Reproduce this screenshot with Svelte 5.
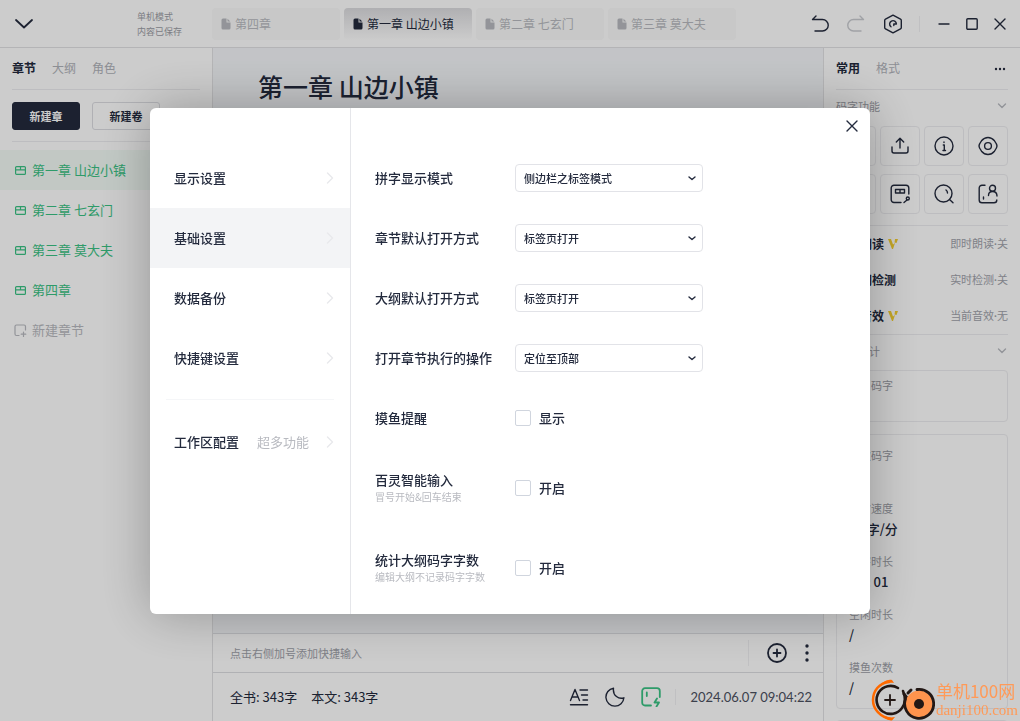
<script>
  const tabs = ['第四章', '第一章 山边小镇', '第二章 七玄门', '第三章 莫大夫'];
  const chapters = ['第一章 山边小镇', '第二章 七玄门', '第三章 莫大夫', '第四章'];
  const menu = ['显示设置', '基础设置', '数据备份', '快捷键设置'];

  const features = [
    { name: '智能朗读', state: '即时朗读·关', vip: true },
    { name: '敏感词检测', state: '实时检测·关', vip: false },
    { name: '码字音效', state: '当前音效·无', vip: true }
  ];

  const stats = [
    { label: '本次码字', value: '0' },
    { label: '实时速度', value: '13 字/分' },
    { label: '码字时长', value: '00 : 01' },
    { label: '空闲时长', value: '/' },
    { label: '摸鱼次数', value: '/' }
  ];

  const selects = [
    { id: 'spell', label: '拼字显示模式', options: ['侧边栏之标签模式', '独立窗口模式'] },
    { id: 'chapter', label: '章节默认打开方式', options: ['标签页打开', '新窗口打开'] },
    { id: 'outline', label: '大纲默认打开方式', options: ['标签页打开', '新窗口打开'] },
    { id: 'action', label: '打开章节执行的操作', options: ['定位至顶部', '定位至底部'] }
  ];

  const checks = [
    { id: 'remind', label: '摸鱼提醒', hint: '', text: '显示' },
    { id: 'smart', label: '百灵智能输入', hint: '冒号开始&回车结束', text: '开启' },
    { id: 'count', label: '统计大纲码字字数', hint: '编辑大纲不记录码字字数', text: '开启' }
  ];

  let activeTab = $state(1);
  let activeChapter = $state(0);
  let activeMenu = $state(1);
  let open = $state(true);
</script>

{#snippet chevronDown()}
  <svg width="10" height="6" viewBox="0 0 10 6" class="line"><path d="M1.500 1l3.500 3.500L8.500 1" /></svg>
{/snippet}

<div class="app">
  <header>
    <div class="brand">
      <button class="icon" aria-label="收起">
        <svg width="18" height="10" viewBox="0 0 18 10" class="line thick"><path d="M1 1l8 7.500L17 1" /></svg>
      </button>
      <p class="save">单机模式<br />内容已保存</p>
    </div>
    <nav class="tabs">
      {#each tabs as tab, i}
        <button class="tab" class:active={activeTab === i} onclick={() => (activeTab = i)}>
          <svg width="10" height="12" viewBox="0 0 10 12">
            <path d="M2 .5h3.500v4h4V10a1.500 1.500 0 0 1-1.500 1.500H2A1.500 1.500 0 0 1 .5 10V2A1.500 1.500 0 0 1 2 .5zM6.500.7l2.800 2.800H6.500z" fill="currentColor" />
          </svg>
          {tab}
        </button>
      {/each}
    </nav>
    <div class="tools">
      <button class="icon" aria-label="撤销">
        <svg width="18" height="18" viewBox="0 0 18 18" class="line"><path d="M5 1L1.500 4.500H11.500a5.500 5.500 0 0 1 0 11.500H4" /></svg>
      </button>
      <button class="icon faded" aria-label="重做">
        <svg width="18" height="18" viewBox="0 0 18 18" class="line"><path d="M13 1l3.500 3.500H6.500a5.500 5.500 0 0 0 0 11.500H14" /></svg>
      </button>
      <button class="icon" aria-label="设置" onclick={() => (open = true)}>
        <svg width="20" height="20" viewBox="0 0 20 20" class="line">
          <path d="M10 1.200l7.500 4a1.500 1.500 0 0 1 .8 1.300v7a1.500 1.500 0 0 1-.8 1.300l-7.500 4-7.500-4a1.500 1.500 0 0 1-.8-1.300v-7a1.500 1.500 0 0 1 .8-1.300z" />
          <path d="M8 12.800A3.400 3.400 0 1 1 13.400 10M13.400 10H10.800V11.500" />
        </svg>
      </button>
      <span class="split"></span>
      <div class="window">
        <button class="icon" aria-label="最小化">
          <svg width="12" height="12" viewBox="0 0 12 12" class="line"><path d="M1 6h10" /></svg>
        </button>
        <button class="icon" aria-label="最大化">
          <svg width="12" height="12" viewBox="0 0 12 12" class="line"><rect x=".8" y=".8" width="10.400" height="10.400" rx="1" /></svg>
        </button>
        <button class="icon" aria-label="关闭">
          <svg width="12" height="12" viewBox="0 0 12 12" class="line"><path d="M1 1l10 10M11 1L1 11" /></svg>
        </button>
      </div>
    </div>
  </header>

  <div class="body">
    <aside class="left">
      <div class="switch">
        <button class="on">章节</button>
        <button>大纲</button>
        <button>角色</button>
      </div>
      <div class="create">
        <button class="primary">新建章</button>
        <button>新建卷</button>
      </div>
      <ul>
        {#each chapters as chapter, i}
          <li>
            <button class="chapter" class:active={activeChapter === i} onclick={() => (activeChapter = i)}>
              <svg width="11" height="9" viewBox="0 0 11 9" class="line thin">
                <rect x=".6" y=".6" width="9.800" height="7.800" rx="1" /><path d="M.6 3.800h9.800M5.500 .6v3.200" />
              </svg>
              {chapter}
            </button>
          </li>
        {/each}
        <li>
          <button class="chapter new">
            <svg width="13" height="13" viewBox="0 0 13 13" class="line thin">
              <path d="M5 11.500H2.500a1.500 1.500 0 0 1-1.500-1.500V2.500A1.500 1.500 0 0 1 2.500 1H10a1.500 1.500 0 0 1 1.500 1.500V6M9.500 8v4.500M7.200 10.200h4.600" />
            </svg>
            新建章节
          </button>
        </li>
      </ul>
    </aside>

    <main>
      <div class="editor">
        <h1>第一章 山边小镇</h1>
      </div>
      <div class="quick">
        <input aria-label="快捷输入" placeholder="点击右侧加号添加快捷输入" />
        <span class="split tall"></span>
        <button class="icon" aria-label="添加">
          <svg width="20" height="20" viewBox="0 0 20 20" class="line thick"><circle cx="10" cy="10" r="9" /><path d="M10 6.500v7M6.500 10h7" /></svg>
        </button>
        <button class="icon" aria-label="更多">
          <svg width="4" height="18" viewBox="0 0 4 18" fill="currentColor"><circle cx="2" cy="2" r="1.700" /><circle cx="2" cy="9" r="1.700" /><circle cx="2" cy="16" r="1.700" /></svg>
        </button>
      </div>
      <footer>
        <span>全书: 343字</span>
        <span>本文: 343字</span>
        <div class="modes">
          <button class="icon" aria-label="排版">
            <svg width="20" height="18" viewBox="0 0 20 18" class="line">
              <path d="M1.500 12.500L6 1.500l4.500 11M3 9h6M11 2h7.500M12.500 7h6M14 12h4.500M1.500 16.800h17" />
            </svg>
          </button>
          <button class="icon" aria-label="夜间">
            <svg width="20" height="20" viewBox="0 0 20 20" class="line"><path d="M8.500 1.200A9 9 0 1 0 18.900 10.800C14 12.500 7.500 9 8.500 1.200z" /></svg>
          </button>
          <button class="icon green" aria-label="专注">
            <svg width="20" height="20" viewBox="0 0 20 20" class="line thick">
              <path d="M10 18.500H4A2.800 2.800 0 0 1 1.200 15.700V4A2.800 2.800 0 0 1 4 1.200h12A2.800 2.800 0 0 1 18.800 4v6M5.800 5.500v3.500M16 11.500l-2.500 4h4.500l-2.500 4" />
            </svg>
          </button>
        </div>
        <span class="split"></span>
        <time>2024.06.07 09:04:22</time>
      </footer>
    </main>

    <aside class="right">
      <div class="switch">
        <button class="on">常用</button>
        <button>格式</button>
        <button class="icon dots" aria-label="更多">
          <svg width="12" height="4" viewBox="0 0 12 4" fill="currentColor"><circle cx="2" cy="2" r="1.200" /><circle cx="6" cy="2" r="1.200" /><circle cx="10" cy="2" r="1.200" /></svg>
        </button>
      </div>
      <h2>码字功能 {@render chevronDown()}</h2>
      <div class="grid">
        <button aria-label="导入">
          <svg width="20" height="20" viewBox="0 0 20 20" class="line"><path d="M10 2v10M6.500 9l3.500 3.500L13.500 9M2 11v5a2 2 0 0 0 2 2h12a2 2 0 0 0 2-2v-5" /></svg>
        </button>
        <button aria-label="导出">
          <svg width="20" height="20" viewBox="0 0 20 20" class="line"><path d="M10 12V2.500M6.300 6L10 2.300 13.700 6M2 11v4a2 2 0 0 0 2 2h12a2 2 0 0 0 2-2v-4" /></svg>
        </button>
        <button aria-label="信息">
          <svg width="20" height="20" viewBox="0 0 20 20" class="line"><circle cx="10" cy="10" r="9" /><path d="M9.300 9h1v5.500M9 14.500h2.500M10 6v.5" /></svg>
        </button>
        <button aria-label="查看">
          <svg width="20" height="20" viewBox="0 0 20 20" class="line"><path d="M10 1.500c3 0 5 1.500 6.500 3.300C18 6.800 19 8.500 19 10s-1 3.200-2.500 5.200C15 17 13 18.500 10 18.500S5 17 3.500 15.200C2 13.200 1 11.500 1 10s1-3.200 2.500-5.200C5 3 7 1.500 10 1.500z" /><circle cx="10" cy="10" r="3.400" /></svg>
        </button>
        <button aria-label="历史">
          <svg width="20" height="20" viewBox="0 0 20 20" class="line"><circle cx="10" cy="10" r="9" /><path d="M10 5v5l3 2" /></svg>
        </button>
        <button aria-label="取名">
          <svg width="20" height="20" viewBox="0 0 20 20" class="line"><path d="M11 18.500H4A2.800 2.800 0 0 1 1.200 15.700V4A2.800 2.800 0 0 1 4 1.200h12A2.800 2.800 0 0 1 18.800 4v6M5.500 5.500h9V9h-9zM10 5.500V9M14 18.500l3-2.500" /><circle cx="17.800" cy="14.500" r="1.500" /></svg>
        </button>
        <button aria-label="查找">
          <svg width="20" height="20" viewBox="0 0 20 20" class="line"><circle cx="9.500" cy="9.500" r="8.500" /><path d="M15.500 15.500l3.500 3.300M12 6c1 .8 1.500 1.800 1.500 3" /></svg>
        </button>
        <button aria-label="人物">
          <svg width="20" height="20" viewBox="0 0 20 20" class="line"><path d="M7 1.200H4A2.800 2.800 0 0 0 1.200 4v12A2.800 2.800 0 0 0 4 18.800h12a2.800 2.800 0 0 0 2.800-2.800M5.500 13v2M10.500 11.500c0-2.500 1.500-4 4-4s4.500 1.500 4.500 4.500" /><circle cx="14.500" cy="4.300" r="3" /></svg>
        </button>
      </div>
      <ul class="features">
        {#each features as item}
          <li>
            <b>{item.name}</b>
            {#if item.vip}
              <svg width="10" height="10" viewBox="0 0 10 10"><path d="M0 0h3l2 5.500L7 4l-2 6H4zM7 0h3L8.500 4l-2-.5z" fill="#f5cf2f" /></svg>
            {/if}
            <span>{item.state}</span>
          </li>
        {/each}
      </ul>
      <h2>码字统计 {@render chevronDown()}</h2>
      <dl class="card small">
        <div><dt>今日码字</dt><dd>0</dd></div>
      </dl>
      <dl class="card">
        {#each stats as stat}
          <div><dt>{stat.label}</dt><dd>{stat.value}</dd></div>
        {/each}
      </dl>
      <div class="card"></div>
    </aside>
  </div>
</div>

{#if open}
  <div class="backdrop">
    <div class="dialog" role="dialog" aria-label="设置">
      <nav class="menu">
        {#each menu as item, i}
          <button class:active={activeMenu === i} onclick={() => (activeMenu = i)}>
            {item}
            <svg width="8" height="12" viewBox="0 0 8 12" class="line"><path d="M1.500 1l5 5-5 5" /></svg>
          </button>
        {/each}
        <hr />
        <button>
          工作区配置 <span>超多功能</span>
          <svg width="8" height="12" viewBox="0 0 8 12" class="line"><path d="M1.500 1l5 5-5 5" /></svg>
        </button>
      </nav>
      <form class="settings">
        {#each selects as item}
          <div class="row">
            <label for={item.id}>{item.label}</label>
            <div class="select">
              <select id={item.id}>
                {#each item.options as option}
                  <option>{option}</option>
                {/each}
              </select>
              <svg width="8" height="5" viewBox="0 0 8 5" class="line"><path d="M1 1l3 2.500L7 1" /></svg>
            </div>
          </div>
        {/each}
        {#each checks as item}
          <div class="row" class:tall={item.hint}>
            <div>
              {item.label}
              {#if item.hint}<small>{item.hint}</small>{/if}
            </div>
            <label class="check" for={item.id}>
              <input type="checkbox" id={item.id} />
              {item.text}
            </label>
          </div>
        {/each}
      </form>
      <button class="icon close" aria-label="关闭设置" onclick={() => (open = false)}>
        <svg width="12" height="12" viewBox="0 0 12 12" class="line"><path d="M1 1l10 10M11 1L1 11" /></svg>
      </button>
    </div>
  </div>
{/if}

<div class="mark">
  <svg width="64" height="42" viewBox="0 0 64 42" fill="none" stroke-linecap="round">
    <path d="M18 3C8 4 2 12 2 21s7 17 18 19" stroke="#ff6a00" stroke-width="2.500" />
    <path d="M8 8c3-5 8-8 13-7l2 3c-6-1-11 1-15 4zM10 35c4 3 9 4 14 3l-3 3.500c-5 0-9-3-11-6.500z" fill="#ff6a00" />
    <path d="M27 9A14 14 0 1 0 31 29C34 25 35 19 32 12" stroke="#231815" stroke-width="2.600" />
    <path d="M19 16v10M14 21h10" stroke="#231815" stroke-width="1.800" />
    <path d="M33 15l3 4M37 14l3-3" stroke="#231815" stroke-width="3" />
    <circle cx="48" cy="25" r="13.500" fill="#ff944d" />
    <path d="M46 10.500A14.500 14.500 0 1 1 34.500 20" stroke="#231815" stroke-width="2.800" />
    <circle cx="48" cy="25" r="5" fill="#231815" />
  </svg>
  <p>单机100网<span>danji100.com</span></p>
</div>

<style>
  :global(body) {
    margin: 0;
    overflow: hidden;
  }

  .app, .backdrop, .mark {
    font-family: 'Noto Sans CJK SC', sans-serif;
    color: #232a3d;
  }

  button, input, select {
    font: inherit;
    color: inherit;
    background: none;
    border: none;
    margin: 0;
    padding: 0;
  }

  button {
    cursor: pointer;
  }

  ul, dl, dd, p, h1, h2 {
    margin: 0;
    padding: 0;
    list-style: none;
  }

  svg {
    display: block;
    flex-shrink: 0;
  }

  .line {
    fill: none;
    stroke: currentColor;
    stroke-width: 1.4;
    stroke-linecap: round;
    stroke-linejoin: round;
  }

  .thick {
    stroke-width: 1.8;
  }

  .thin {
    stroke-width: 1.2;
  }

  .app {
    display: flex;
    flex-direction: column;
    height: 100vh;
    background: #fff;
    font-size: 12px;
    line-height: 16px;
  }

  /* Top bar */
  header {
    display: flex;
    align-items: center;
    height: 47px;
    border-bottom: 1px solid #e2e2e4;
    flex-shrink: 0;
  }

  .brand {
    display: flex;
    align-items: center;
    justify-content: space-between;
    width: 212px;
    padding: 0 30px 0 15px;
    box-sizing: border-box;
    flex-shrink: 0;
  }

  .save {
    font-size: 9px;
    line-height: 15px;
    color: #9b9da5;
  }

  .tabs {
    display: flex;
    gap: 4px;
    flex: 1;
    min-width: 0;
  }

  .tab {
    display: flex;
    align-items: center;
    gap: 4px;
    width: 128px;
    height: 32px;
    padding: 0 9px;
    border-radius: 4px;
    background: #fafafa;
    color: #b8bac0;
    white-space: nowrap;
  }

  .tab.active {
    background: linear-gradient(#dcdcdf, #fff);
    color: #232a3d;
  }

  .tools {
    display: flex;
    align-items: center;
    gap: 18px;
    padding-right: 14px;
  }

  .window {
    display: flex;
    gap: 16px;
  }

  .faded {
    color: #c9cbd0;
  }

  .split {
    width: 1px;
    height: 16px;
    background: #f0f0f3;
    margin-left: -2px;
  }

  .body {
    display: flex;
    flex: 1;
    min-height: 0;
  }

  aside {
    box-sizing: border-box;
    overflow: hidden;
    flex-shrink: 0;
  }

  .left {
    width: 213px;
    border-right: 1px solid #e2e2e4;
  }

  .right {
    width: 197px;
    padding: 0 12px;
    border-left: 1px solid #e2e2e4;
  }

  .switch {
    display: flex;
    align-items: center;
    gap: 16px;
    height: 39px;
    padding-bottom: 2px;
    border-bottom: 1px solid #ededf0;
    color: #b0b2b9;
  }

  .left .switch {
    margin: 0 12px;
  }

  .switch .on {
    color: #232a3d;
    font-weight: bold;
  }

  .switch .dots {
    margin-left: auto;
    padding: 2px 2px 0 0;
    color: #232a3d;
  }

  .create {
    display: flex;
    gap: 12px;
    margin: 0 12px 8px;
    padding: 12px 0 11px;
    border-bottom: 1px solid #ededf0;
  }

  .create button {
    width: 68px;
    height: 28px;
    border: 1px solid #dcdde2;
    border-radius: 3px;
    font-size: 11px;
    font-weight: bold;
  }

  .create .primary {
    background: #232a3d;
    border-color: #232a3d;
    color: #fff;
  }

  .chapter {
    display: flex;
    align-items: center;
    gap: 6px;
    width: 100%;
    height: 40px;
    padding-left: 15px;
    font-size: 13px;
    color: #3ac284;
  }

  .chapter.active {
    background: #f3fbf6;
  }

  .chapter.new {
    gap: 5px;
    padding-left: 14px;
    color: #b8bac0;
  }

  /* Editor */
  main {
    display: flex;
    flex-direction: column;
    flex: 1;
    min-width: 0;
  }

  .editor {
    flex: 1;
    padding: 22px 45px;
    background: #f4f6f9;
  }

  h1 {
    font-size: 25px;
    line-height: 32px;
    font-weight: 500;
  }

  .quick, footer {
    display: flex;
    align-items: center;
    border-top: 1px solid #dddee2;
    padding: 0 11px 0 17px;
  }

  .quick {
    height: 38px;
    gap: 18px;
    padding-right: 14px;
  }

  .quick input {
    flex: 1;
    min-width: 0;
    font-size: 11px;
    outline: none;
  }

  .quick input::placeholder {
    color: #a0a2aa;
  }

  .split.tall {
    height: 26px;
  }

  footer {
    height: 48px;
    gap: 14px;
    font-size: 13px;
  }

  .modes {
    display: flex;
    align-items: center;
    gap: 16px;
    margin-left: auto;
  }

  .green {
    color: #3ac284;
  }

  footer .split {
    margin-left: 0;
  }

  time {
    font-family: Lato, sans-serif;
    color: #4b5060;
  }

  /* Right panel */
  h2 {
    display: flex;
    align-items: center;
    justify-content: space-between;
    height: 32px;
    padding-right: 1px;
    font-size: 11px;
    font-weight: normal;
    color: #9b9da5;
  }

  h2 svg {
    color: #b8bac0;
  }

  .grid {
    display: grid;
    grid-template-columns: repeat(4, 1fr);
    gap: 8px 4px;
    padding: 4px 0 11px;
    border-bottom: 1px solid #ededf0;
  }

  .grid button {
    display: grid;
    place-items: center;
    height: 40px;
    border: 1px solid #ededf0;
    border-radius: 4px;
  }

  .features {
    border-bottom: 1px solid #ededf0;
  }

  .features li {
    display: flex;
    align-items: center;
    gap: 4px;
    height: 36px;
  }

  .features span {
    margin-left: auto;
    font-family: Lato, 'Noto Sans CJK SC', sans-serif;
    font-size: 11px;
    color: #a0a2aa;
  }

  .card {
    display: grid;
    gap: 16px;
    border: 1px solid #ededf0;
    border-radius: 4px;
    padding: 12px;
    margin: 0 0 11px;
  }

  .card.small {
    margin: 3px 0 12px;
    padding: 6px 12px 7px;
  }

  dt {
    font-size: 11px;
    color: #9b9da5;
  }

  dd {
    padding-top: 5px;
    font-size: 13px;
    font-weight: 500;
  }

  /* Settings dialog */
  .backdrop {
    position: fixed;
    inset: 0;
    display: grid;
    place-items: center;
    background: rgba(0, 0, 0, 0.2);
    font-size: 13px;
    line-height: 18px;
    font-weight: 500;
  }

  .dialog {
    position: relative;
    display: flex;
    width: 100%;
    max-width: 720px;
    background: #fff;
    border-radius: 6px;
    box-shadow: 0 0 52px rgba(0, 0, 0, 0.28);
  }

  .menu {
    width: 200px;
    padding-top: 40px;
    border-right: 1px solid #e5e6ea;
  }

  .menu button {
    display: flex;
    align-items: center;
    width: 100%;
    height: 60px;
    padding: 0 16px 0 24px;
  }

  .menu .active {
    background: #f3f4f6;
  }

  .menu span {
    margin-left: 18px;
    font-weight: normal;
    color: #b8bac0;
  }

  .menu svg {
    margin-left: auto;
    color: #e8e9ec;
  }

  hr {
    margin: 11px 16px 12px;
    border: none;
    border-top: 1px solid #f5f6f8;
  }

  .settings {
    flex: 1;
    padding: 40px 24px 6px;
  }

  .row {
    display: grid;
    grid-template-columns: 140px 1fr;
    align-items: center;
    height: 60px;
  }

  .row.tall {
    height: 80px;
  }

  small {
    display: block;
    font-size: 10px;
    line-height: 16px;
    font-weight: normal;
    color: #b8bac0;
  }

  .select {
    position: relative;
    width: 188px;
  }

  select {
    width: 100%;
    height: 28px;
    padding: 0 24px 0 8px;
    border: 1px solid #e2e3e8;
    border-radius: 4px;
    appearance: none;
    font-size: 11px;
  }

  .select svg {
    position: absolute;
    top: 12px;
    right: 7px;
    pointer-events: none;
  }

  .check {
    display: flex;
    align-items: center;
    gap: 8px;
  }

  .check input {
    appearance: none;
    width: 16px;
    height: 16px;
    border: 1px solid #d0d5de;
    border-radius: 2px;
  }

  .check input:checked {
    background: #3ac284;
  }

  .close {
    position: absolute;
    top: 12px;
    right: 12px;
  }

  .mark {
    position: fixed;
    right: 2px;
    bottom: 0;
    display: flex;
    align-items: center;
    gap: 1px;
    pointer-events: none;
  }

  .mark p {
    font-size: 17px;
    line-height: 20px;
    color: #ff9a58;
  }

  .mark span {
    display: block;
    font-family: 'Liberation Serif', serif;
    font-size: 15px;
    line-height: 18px;
  }
</style>
